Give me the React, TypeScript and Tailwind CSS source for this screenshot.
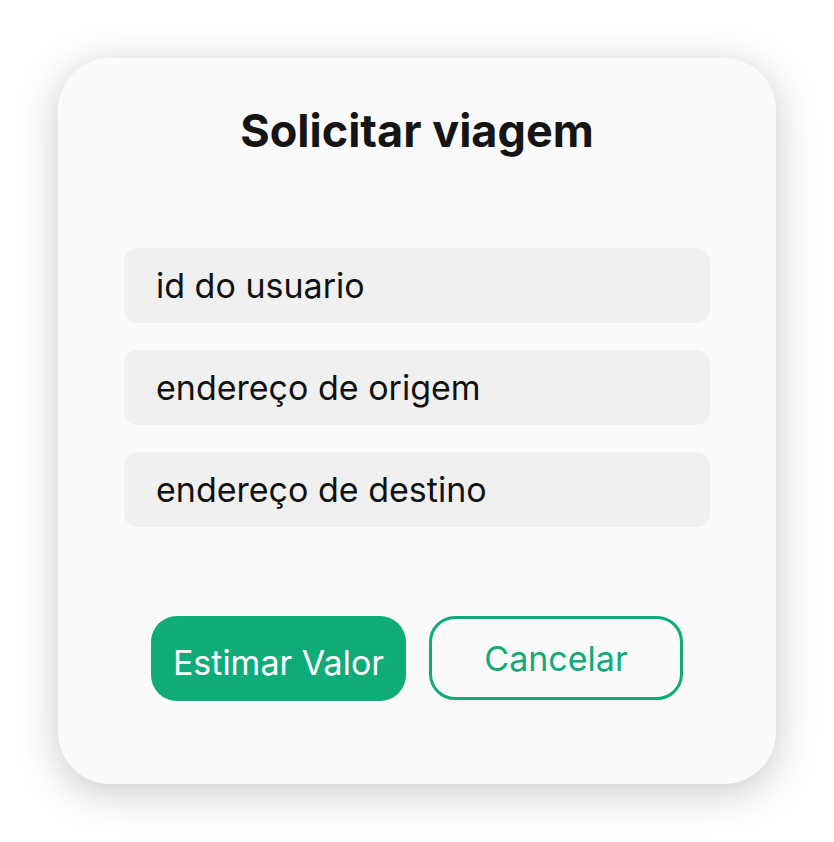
export default function App() {
  const fields = ['id do usuario', 'endereço de origem', 'endereço de destino'];
  return (
    <div className="min-h-[842px] bg-white p-[58px] font-['Inter',sans-serif]">
      <div className="flex h-[726px] flex-col items-center rounded-[52px] bg-[#fafafa] px-[66px] pt-[46px] shadow-[0_8px_40px_rgba(0,0,0,0.22)]">
        <h1 className="text-[45px] font-bold leading-[54px] text-[#151515]">Solicitar viagem</h1>
        <div className="mt-[90px] flex w-full flex-col gap-[27px]">
          {fields.map((f) => (
            <div
              key={f}
              className="flex h-[75px] items-center rounded-[14px] bg-[#f0f0f0] px-[32px] text-[34px] text-[#111]"
            >
              {f}
            </div>
          ))}
        </div>
        <div className="mt-[89px] flex gap-[23px]">
          <button className="h-[85px] w-[255px] rounded-[26px] bg-[#0fab78] pt-[8px] text-[34px] text-white">
            Estimar Valor
          </button>
          <button className="h-[84px] w-[254px] rounded-[26px] border-[3px] border-[#0fab78] text-[34px] text-[#0fab78]">
            Cancelar
          </button>
        </div>
      </div>
    </div>
  );
}
